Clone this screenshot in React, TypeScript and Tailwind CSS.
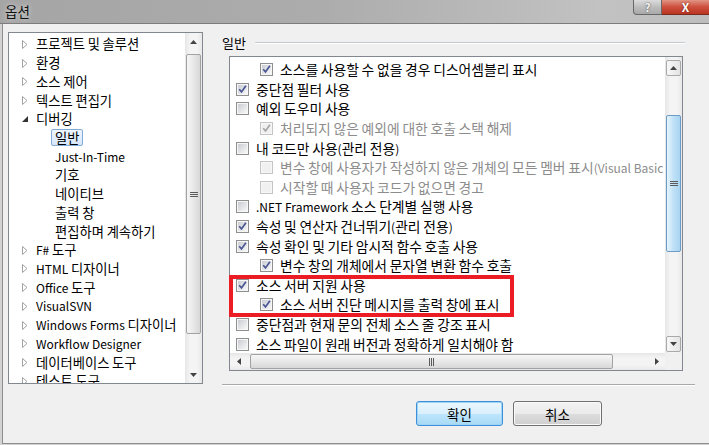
import React from 'react';

type TreeItem = { t: string; lvl: 0 | 1; arrow?: 'closed' | 'open'; sel?: boolean };

const tree: TreeItem[] = [
  { t: '프로젝트 및 솔루션', lvl: 0, arrow: 'closed' },
  { t: '환경', lvl: 0, arrow: 'closed' },
  { t: '소스 제어', lvl: 0, arrow: 'closed' },
  { t: '텍스트 편집기', lvl: 0, arrow: 'closed' },
  { t: '디버깅', lvl: 0, arrow: 'open' },
  { t: '일반', lvl: 1, sel: true },
  { t: 'Just-In-Time', lvl: 1 },
  { t: '기호', lvl: 1 },
  { t: '네이티브', lvl: 1 },
  { t: '출력 창', lvl: 1 },
  { t: '편집하며 계속하기', lvl: 1 },
  { t: 'F# 도구', lvl: 0, arrow: 'closed' },
  { t: 'HTML 디자이너', lvl: 0, arrow: 'closed' },
  { t: 'Office 도구', lvl: 0, arrow: 'closed' },
  { t: 'VisualSVN', lvl: 0, arrow: 'closed' },
  { t: 'Windows Forms 디자이너', lvl: 0, arrow: 'closed' },
  { t: 'Workflow Designer', lvl: 0, arrow: 'closed' },
  { t: '데이터베이스 도구', lvl: 0, arrow: 'closed' },
  { t: '테스트 도구', lvl: 0, arrow: 'closed' },
];

type Row = { t: string; ind?: boolean; c?: boolean; d?: boolean };

const rows: Row[] = [
  { t: '소스를 사용할 수 없을 경우 디스어셈블리 표시', ind: true, c: true },
  { t: '중단점 필터 사용', c: true },
  { t: '예외 도우미 사용' },
  { t: '처리되지 않은 예외에 대한 호출 스택 해제', ind: true, c: true, d: true },
  { t: '내 코드만 사용(관리 전용)' },
  { t: '변수 창에 사용자가 작성하지 않은 개체의 모든 멤버 표시(Visual Basic 및 C#)', ind: true, d: true },
  { t: '시작할 때 사용자 코드가 없으면 경고', ind: true, d: true },
  { t: '.NET Framework 소스 단계별 실행 사용' },
  { t: '속성 및 연산자 건너뛰기(관리 전용)', c: true },
  { t: '속성 확인 및 기타 암시적 함수 호출 사용', c: true },
  { t: '변수 창의 개체에서 문자열 변환 함수 호출', ind: true, c: true },
  { t: '소스 서버 지원 사용', c: true },
  { t: '소스 서버 진단 메시지를 출력 창에 표시', ind: true, c: true },
  { t: '중단점과 현재 문의 전체 소스 줄 강조 표시' },
  { t: '소스 파일이 원래 버전과 정확하게 일치해야 함' },
];

/* Hangul runs keep the container's (larger) size; ASCII runs are set at 12px,
   which mimics Malgun Gothic's wide Hangul with narrow Latin. */
function Mixed({ t }: { t: string }) {
  const parts = t.split(/([\u0000-\u007F]+)/).filter((p) => p.length > 0);
  return (
    <>
      {parts.map((p, i) =>
        /^[\u0000-\u007F]+$/.test(p) ? (
          <span key={i} className="text-[12px]">
            {p}
          </span>
        ) : (
          <span key={i}>{p}</span>
        )
      )}
    </>
  );
}

function CheckBox({ checked, disabled, id }: { checked?: boolean; disabled?: boolean; id: number }) {
  return (
    <svg width="13" height="13" viewBox="0 0 13 13" className="shrink-0">
      <defs>
        <linearGradient id={`cbg${id}`} x1="0" y1="0" x2="1" y2="1">
          <stop offset="0" stopColor="#c9ccd2" />
          <stop offset="1" stopColor="#f8f8f8" />
        </linearGradient>
      </defs>
      <rect x="0.5" y="0.5" width="12" height="12" fill="#f7f7f7" stroke={disabled ? '#c4c4c4' : '#8e8f8f'} />
      <rect x="2" y="2" width="9" height="9" fill={disabled ? '#f0f0f0' : `url(#cbg${id})`} />
      {checked && (
        <path
          d="M3.2 6.3 L5.5 8.9 L9.9 2.7"
          fill="none"
          stroke={disabled ? '#a5a5a5' : '#4a5694'}
          strokeWidth="1.7"
        />
      )}
    </svg>
  );
}

function TriUp() {
  return (
    <svg width="7" height="4" viewBox="0 0 7 4">
      <path d="M0 4 L3.5 0 L7 4 Z" fill="#444" />
    </svg>
  );
}
function TriDown() {
  return (
    <svg width="7" height="4" viewBox="0 0 7 4">
      <path d="M0 0 L3.5 4 L7 0 Z" fill="#444" />
    </svg>
  );
}
function TriLeft() {
  return (
    <svg width="4" height="7" viewBox="0 0 4 7">
      <path d="M4 0 L0 3.5 L4 7 Z" fill="#444" />
    </svg>
  );
}
function TriRight() {
  return (
    <svg width="4" height="7" viewBox="0 0 4 7">
      <path d="M0 0 L4 3.5 L0 7 Z" fill="#444" />
    </svg>
  );
}

function GripH() {
  return (
    <svg width="8" height="7" viewBox="0 0 8 7">
      <path d="M0 1.5 H8 M0 3.5 H8 M0 5.5 H8" stroke="#5a5a5a" strokeWidth="1" />
    </svg>
  );
}
function GripV() {
  return (
    <svg width="7" height="8" viewBox="0 0 7 8">
      <path d="M1.5 0 V8 M3.5 0 V8 M5.5 0 V8" stroke="#5a5a5a" strokeWidth="1" />
    </svg>
  );
}

function TreeArrow({ kind }: { kind?: 'closed' | 'open' }) {
  if (kind === 'closed')
    return (
      <svg width="6" height="9" viewBox="0 0 6 9">
        <path d="M0.5 0.5 L5 4.5 L0.5 8.5 Z" fill="#fff" stroke="#a3a3a3" />
      </svg>
    );
  if (kind === 'open')
    return (
      <svg width="6" height="6" viewBox="0 0 6 6">
        <path d="M6 0 V6 H0 Z" fill="#333" />
      </svg>
    );
  return null;
}

export default function App() {
  return (
    <div className="relative w-[709px] h-[445px] overflow-hidden bg-[#f0f0f0] flex flex-col text-[12px] text-black font-['Noto_Sans_CJK_KR',sans-serif]">
      {/* Title bar */}
      <div className="h-[24px] shrink-0 flex items-start border-b border-[#7c7c7c] bg-[linear-gradient(to_right,#a5a5a5,#acacac_45%,#c2c2c2_85%,#bdbdbd)]">
        <div className="pl-[5px] pt-[3px] leading-[16px] text-[13.5px] text-[#111] [text-shadow:0_0_5px_#e6e6e6]">옵션</div>
        <div className="ml-auto flex items-start">
          <div className="w-[29px] h-[15px] flex items-center justify-center rounded-bl-[4px] border border-t-0 border-[#686868] bg-[linear-gradient(#dcdcdc,#bdbdbd_50%,#a9a9a9)] text-[11px] font-bold text-[#f4f4f4] leading-none [text-shadow:0_0_2px_#444]">
            ?
          </div>
          <div className="w-[47px] h-[15px] flex items-center justify-center border-b border-[#7a2a20] bg-[linear-gradient(#e29585,#cd4f3c_50%,#b93522)] text-[12px] font-bold text-white leading-none [text-shadow:0_0_2px_#6a1a10]">
            X
          </div>
        </div>
      </div>

      {/* Body */}
      <div className="flex-1 border-l-2 border-b border-[#d3d3d3]">
        <div className="h-full border-l border-b border-[#8d8d8d] flex items-start pl-[5px] pt-[8px]">
          {/* Tree */}
          <div className="w-[195px] h-[352px] border border-[#828790] bg-white flex">
            <div className="w-[176px] overflow-hidden pt-[2px] text-[13.3px]">
              {tree.map((it, i) => (
                <div
                  key={i}
                  className={`h-[18.72px] flex items-center whitespace-nowrap ${it.lvl === 0 ? 'pl-[13px]' : 'pl-[42px]'}`}
                >
                  {it.lvl === 0 && (
                    <span className="w-[14px] flex items-center">
                      <TreeArrow kind={it.arrow} />
                    </span>
                  )}
                  {it.sel ? (
                    <span className="h-[17px] px-[3px] flex items-center border border-[#84aad8] rounded-[2px] bg-[linear-gradient(#eef5fd,#d6e7fb)] leading-[15px]">
                      <Mixed t={it.t} />
                    </span>
                  ) : (
                    <span className={`leading-[16px] ${it.lvl === 1 ? 'pl-[4px]' : ''}`}>
                      <Mixed t={it.t} />
                    </span>
                  )}
                </div>
              ))}
            </div>
            <div className="w-[17px] flex flex-col bg-[linear-gradient(to_right,#e6e6e6,#f4f4f4_30%,#f4f4f4_70%,#e8e8e8)]">
              <div className="h-[17px] flex items-center justify-center">
                <TriUp />
              </div>
              <div className="flex-1 px-[1px]">
                <div className="mt-[4px] h-[280px] rounded-[2px] border border-[#a2a2a2] bg-[linear-gradient(to_right,#f6f6f6,#e8e8e8_50%,#d8d8d8)] flex items-center justify-center">
                  <GripH />
                </div>
              </div>
              <div className="h-[17px] flex items-center justify-center">
                <TriDown />
              </div>
            </div>
          </div>

          {/* Right column */}
          <div className="ml-[19px] w-[473px] flex flex-col">
            <div className="mt-[3px] h-[16px] flex items-center">
              <span className="leading-[16px] text-[13px]">일반</span>
              <div className="ml-[9px] mr-[10px] flex-1 h-[2px] border-t border-[#c4cbd0] border-b border-b-white mt-[-1px]" />
            </div>

            {/* List box */}
            <div className="mt-[5px] ml-[7px] w-[454px] h-[315px] border border-[#828790] bg-white flex flex-col">
              <div className="h-[296px] flex">
                <div className="w-[435px] overflow-hidden pt-[3px] text-[13.8px]">
                  {rows.map((r, i) => (
                    <div
                      key={i}
                      className={`h-[19.6px] flex items-center gap-[7px] whitespace-nowrap ${r.ind ? 'pl-[30px]' : 'pl-[6px]'}`}
                    >
                      <CheckBox checked={r.c} disabled={r.d} id={i} />
                      <span className={`leading-[16px] ${r.d ? 'text-[#8c8c8c]' : 'text-black'}`}>
                        <Mixed t={r.t} />
                      </span>
                    </div>
                  ))}
                </div>
                <div className="w-[17px] flex flex-col bg-[linear-gradient(to_right,#e6e6e6,#f4f4f4_30%,#f4f4f4_70%,#e8e8e8)]">
                  <div className="mt-[3px] mx-[1px] h-[16px] rounded-[2px] border border-[#a9a9a9] bg-[linear-gradient(to_right,#f8f8f8,#e4e4e4)] flex items-center justify-center">
                    <TriUp />
                  </div>
                  <div className="flex-1 px-[1px]">
                    <div className="mt-[39px] h-[137px] rounded-[2px] border border-[#6c9bc4] bg-[linear-gradient(to_right,#e6f4fc,#bfe1f7_50%,#a8d4f2)] flex items-center justify-center">
                      <GripH />
                    </div>
                  </div>
                  <div className="mb-[1px] mx-[1px] h-[16px] rounded-[2px] border border-[#a9a9a9] bg-[linear-gradient(to_right,#f8f8f8,#e4e4e4)] flex items-center justify-center">
                    <TriDown />
                  </div>
                </div>
              </div>
              <div className="h-[17px] flex">
                <div className="w-[435px] flex items-center bg-[linear-gradient(#e6e6e6,#f4f4f4_30%,#f4f4f4_70%,#e8e8e8)]">
                  <div className="w-[17px] flex items-center justify-center">
                    <TriLeft />
                  </div>
                  <div className="w-[401px] h-full py-[1px]">
                    <div className="ml-[3px] w-[363px] h-full rounded-[2px] border border-[#a2a2a2] bg-[linear-gradient(#f6f6f6,#e8e8e8_50%,#d8d8d8)] flex items-center justify-center">
                      <GripV />
                    </div>
                  </div>
                  <div className="w-[17px] flex items-center justify-center">
                    <TriRight />
                  </div>
                </div>
                <div className="w-[17px] bg-[#f0f0f0]" />
              </div>
            </div>

            {/* separator */}
            <div className="mt-[13px] h-[2px] border-t border-[#a9a9a9] border-b border-b-white" />

            {/* buttons */}
            <div className="mt-[15px] flex justify-end pr-[93px] gap-[10px] text-[13.5px]">
              <div className="w-[87px] h-[25px] rounded-[3px] border border-[#3c8fd8] shadow-[inset_0_0_0_1px_#9fd6f8] bg-[linear-gradient(#eaf6fd,#d9f0fc_50%,#bee6fd_51%,#a7d9f5)] flex items-center justify-center leading-[16px]">
                확인
              </div>
              <div className="w-[89px] h-[25px] rounded-[3px] border border-[#707070] shadow-[inset_0_0_0_1px_#fafafa] bg-[linear-gradient(#f2f2f2,#ebebeb_50%,#dddddd_51%,#cfcfcf)] flex items-center justify-center leading-[16px]">
                취소
              </div>
            </div>
          </div>
        </div>
      </div>

      {/* red annotation */}
      <div className="absolute left-[229px] top-[275px] w-[285px] h-[42px] border-4 border-[#ec1c24]" />
    </div>
  );
}
